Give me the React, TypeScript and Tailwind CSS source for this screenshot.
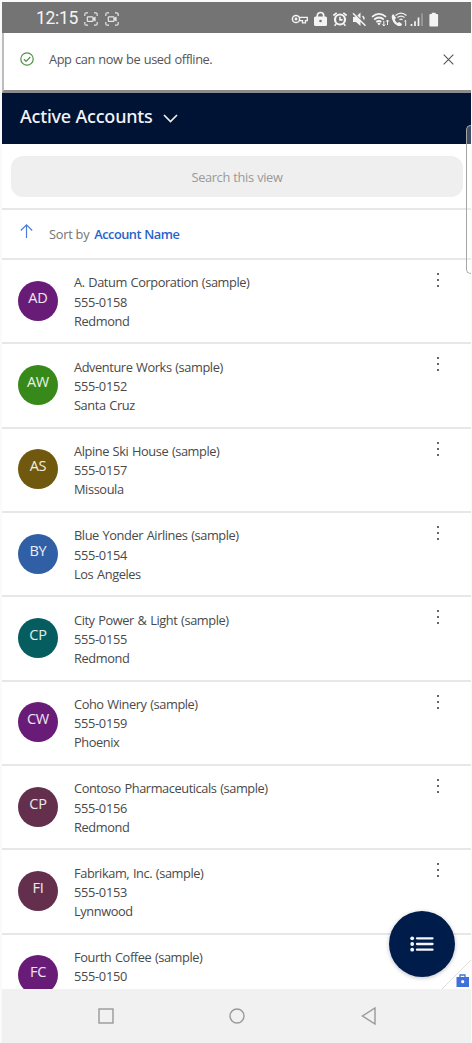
import React from 'react';

type Account = { initials: string; name: string; phone: string; city?: string; color: string };

const accounts: Account[] = [
  { initials: 'AD', name: 'A. Datum Corporation (sample)', phone: '555-0158', city: 'Redmond', color: 'bg-[#681c78]' },
  { initials: 'AW', name: 'Adventure Works (sample)', phone: '555-0152', city: 'Santa Cruz', color: 'bg-[#37891a]' },
  { initials: 'AS', name: 'Alpine Ski House (sample)', phone: '555-0157', city: 'Missoula', color: 'bg-[#70590e]' },
  { initials: 'BY', name: 'Blue Yonder Airlines (sample)', phone: '555-0154', city: 'Los Angeles', color: 'bg-[#305fa6]' },
  { initials: 'CP', name: 'City Power & Light (sample)', phone: '555-0155', city: 'Redmond', color: 'bg-[#065d60]' },
  { initials: 'CW', name: 'Coho Winery (sample)', phone: '555-0159', city: 'Phoenix', color: 'bg-[#681c78]' },
  { initials: 'CP', name: 'Contoso Pharmaceuticals (sample)', phone: '555-0156', city: 'Redmond', color: 'bg-[#632f4d]' },
  { initials: 'FI', name: 'Fabrikam, Inc. (sample)', phone: '555-0153', city: 'Lynnwood', color: 'bg-[#632f4d]' },
  { initials: 'FC', name: 'Fourth Coffee (sample)', phone: '555-0150', color: 'bg-[#681c78]' },
];

function CaptureIcon() {
  return (
    <svg className="h-[14px] w-[14px]" viewBox="0 0 14 14" fill="none" stroke="#e6e6e6" strokeWidth="1.2">
      <path d="M.8 4V2.3Q.8.8 2.3.8H4M10 .8h1.700Q13.200.8 13.200 2.300V4M13.200 10v1.700q0 1.500-1.500 1.500H10M4 13.200H2.300Q.8 13.200.8 11.700V10" />
      <rect x="3.300" y="4.800" width="5.700" height="4.600" rx=".7" />
      <path d="m9 6.800 2-1.200v3L9 7.500" />
    </svg>
  );
}

function StatusIcons() {
  return (
    <svg className="h-[18px] w-[152px]" viewBox="0 0 152 18" fill="none" stroke="#f4f4f4" strokeWidth="1.300">
      <circle cx="5" cy="9" r="3.600" strokeWidth="1.500" />
      <circle cx="5" cy="9" r=".8" />
      <path d="M8 7.400h8.300v3.200h-1.800v2.200h-3v-2.200H8" />
      <path d="M26.300 7V5.700a3.200 3.200 0 0 1 6.400 0V7" strokeWidth="1.700" />
      <rect x="23" y="6.500" width="13" height="9.500" rx="1.500" fill="#f4f4f4" stroke="none" />
      <circle cx="29.500" cy="11" r="1.300" fill="#747474" stroke="none" />
      <circle cx="49" cy="9.500" r="5" strokeWidth="2.200" />
      <path d="M42.300 5.500 45.700 2.800M55.700 5.500 52.300 2.800M45.200 14 43.500 15.700M52.800 14l1.700 1.700M49 6.700v3.200h2.600" strokeWidth="1.600" />
      <path d="M62 7v5h3l4.500 4V10L65 6.500ZM66.300 5.500l3.200-3v6Z" fill="#f4f4f4" stroke="none" />
      <path d="m62 3.200 12.500 12.600M71.500 6.200q1.800 1.400 1.500 3.300" strokeWidth="1.500" />
      <path d="M81 6.800q7-6 14 0M83.200 9.500q4.800-4 9.600 0M85.300 12q2.700-2 5 0" strokeWidth="1.700" />
      <path d="m86.300 13.400 1.700-.8 1.700.8L88 15.600Z" fill="#f4f4f4" stroke="none" />
      <path d="M92.800 11v5m-1.400-1.600 1.400 1.600 1.400-1.600M96.500 15v-5m-1.400 1.600 1.400-1.600 1.400 1.600" strokeWidth="1" />
      <path d="M102.500 4.200c-1.800.3-2.100 2.400-1.500 4.500.9 3.500 3.600 6.600 6.800 7.300 1.700.4 3-.4 3.200-2l-2.800-2.100-1.700 1.100c-1.300-.8-2.300-2-2.700-3.400l1.300-1.700Z" fill="#f4f4f4" stroke="none" />
      <path d="M104.500 5.500q5.500-4.800 11 0M106.500 7.600q3.500-2.800 7 0M108.500 9.700q1.500-1.200 3 0" />
      <path d="m113.300 11.300 1.400-.9v5.600" strokeWidth="1" />
      <path d="M120.500 14v2M124 11.300V16M127.500 7.500V16" strokeWidth="1.700" />
      <path d="M131 3.500V16" stroke="#a6a6a6" strokeWidth="1.400" />
      <path d="M140.800 2.700h3.900v1.400h1.500q.9 0 .9.900v10.600q0 .9-.9.900h-6.900q-.9 0-.9-.9V5q0-.9.900-.9h1.500Z" fill="#f4f4f4" stroke="none" />
    </svg>
  );
}

function AccountRow({ account }: { account: Account }) {
  return (
    <li className="flex h-[84.350px] shrink-0 border-b-2 border-[#e7e7e7] pl-4">
      <div className={`mt-[20.500px] flex h-10 w-10 shrink-0 justify-center rounded-full pt-[7px] text-[14.500px] leading-5 tracking-[-0.2px] text-white/90 ${account.color}`}>
        {account.initials}
      </div>
      <div className="ml-4 flex-1 whitespace-nowrap pt-[13.300px] text-[12.800px] leading-[19.200px] text-[#494949]">
        <div className="tracking-[-0.420px] [word-spacing:0.8px]">{account.name}</div>
        <div className="tracking-[-0.3px]">{account.phone}</div>
        {account.city && <div className="tracking-[-0.4px] [word-spacing:0.8px]">{account.city}</div>}
      </div>
      <button className="mr-[31px] mt-[13px] flex h-[14px] w-[4px] flex-col items-center justify-between" aria-label="More options">
        <span className="h-[2px] w-[2px] bg-[#666]" />
        <span className="h-[2px] w-[2px] bg-[#666]" />
        <span className="h-[2px] w-[2px] bg-[#666]" />
      </button>
    </li>
  );
}

export default function App() {
  return (
    <div className="h-[1043px] w-[472px] overflow-hidden bg-[#fafafa] pl-[2px] pr-[1px] pt-[2px] font-['Open_Sans','Noto_Sans',sans-serif]">
      <div className="relative flex h-full flex-col overflow-hidden bg-white">
        <div className="flex h-[31px] shrink-0 items-center bg-[#747474] pl-[34px] pr-[28px] pt-[2px]">
          <span className="w-[48px] whitespace-nowrap font-['Roboto',sans-serif] text-[17.500px] leading-[29px] tracking-[-0.3px] text-[#f4f4f4]">12:15</span>
          <div className="flex gap-[7px]"><CaptureIcon /><CaptureIcon /></div>
          <div className="ml-auto"><StatusIcons /></div>
        </div>

        <div className="flex h-[60px] shrink-0 items-center border-b-[3px] border-l-2 border-b-[#8c8c8c] border-l-[#bdbdbd] bg-white pl-[16px] pr-[17px]">
          <svg className="-mt-[6px] h-[14px] w-[14px]" viewBox="0 0 14 14" fill="none" stroke="#529247" strokeWidth="1.200">
            <circle cx="7" cy="7" r="6.200" />
            <path d="m3.900 7.300 2.200 2 4.200-4.300" />
          </svg>
          <span className="-mt-[4px] ml-[15px] text-[12.800px] tracking-[-0.420px] text-[#555] [word-spacing:0.6px]">App can now be used offline.</span>
          <svg className="-mt-[5px] ml-auto h-[11px] w-[11px]" viewBox="0 0 11 11" fill="none" stroke="#555" strokeWidth="1.100">
            <path d="m.7.7 9.600 9.600m0-9.600L.7 10.300" />
          </svg>
        </div>

        <header className="flex h-[51px] shrink-0 items-center bg-[#001334] pl-[18px]">
          <h1 className="-mt-[4px] font-['Noto_Sans',sans-serif] text-[18px] font-medium tracking-[-0.2px] text-[#f3f4f6]">Active Accounts</h1>
          <svg className="ml-[10px] h-[9px] w-[15px]" viewBox="0 0 15 9" fill="none" stroke="#eee" strokeWidth="1.700">
            <path d="m1 1 6.500 6.500L14 1" />
          </svg>
        </header>

        <div className="flex h-[65.500px] shrink-0 items-start border-b-2 border-[#e7e7e7] pl-[9px] pr-[8px] pt-[12px]">
          <div className="flex h-[41px] w-full items-center justify-center rounded-[12px] bg-[#efefef] pt-[2px] text-[12.800px] tracking-[-0.350px] text-[#999] [word-spacing:0.5px]">
            Search this view
          </div>
        </div>

        <div className="flex h-[50.500px] shrink-0 items-center border-b-2 border-[#e7e7e7] pl-[18px] text-[12.800px]">
          <svg className="-mt-[5px] h-[14px] w-[13px]" viewBox="0 0 13 14" fill="none" stroke="#4b7dd6" strokeWidth="1.200">
            <path d="M6.500 14V1M.8 6.500 6.500.9l5.700 5.600" />
          </svg>
          <span className="ml-[16px] mt-[2px] tracking-[-0.250px] text-[#747474]">Sort by</span>
          <span className="ml-[5px] mt-[2px] font-semibold tracking-[-0.520px] text-[#2862c9] [word-spacing:0.5px]">Account Name</span>
        </div>

        <ul className="flex min-h-0 flex-1 flex-col overflow-hidden">
          {accounts.map((account) => <AccountRow key={account.name} account={account} />)}
        </ul>

        <nav className="flex h-[54px] shrink-0 items-center bg-[#f1f1f1] pl-[96px]">
          <svg className="h-4 w-4" viewBox="0 0 16 16" fill="none" stroke="#999" strokeWidth="1.400"><rect x="1" y="1" width="14" height="14" /></svg>
          <svg className="ml-[115px] h-4 w-4" viewBox="0 0 16 16" fill="none" stroke="#999" strokeWidth="1.400"><circle cx="8" cy="8" r="7" /></svg>
          <svg className="ml-[116px] h-[18px] w-[15px]" viewBox="0 0 15 18" fill="none" stroke="#999" strokeWidth="1.400"><path d="M14 1v16L1.500 9Z" /></svg>
        </nav>

        <svg className="absolute bottom-[54px] right-0 h-[29px] w-[29px]" viewBox="0 0 29 29">
          <path d="M29 0v29H0Z" fill="white" />
          <path d="M0 29 29 0" stroke="#ddd" />
          <path d="M14.500 17h12.500v10H14.500Z" fill="#4071db" />
          <path d="M18 17v-2h5v2" fill="none" stroke="#4071db" strokeWidth="1.300" />
          <circle cx="20.700" cy="21.700" r="1.600" fill="white" />
        </svg>

        <button className="absolute bottom-[66px] right-[16px] flex h-[66px] w-[66px] items-center justify-center rounded-full bg-[#001c4b] shadow-[0_1px_4px_rgba(0,0,0,0.25)]" aria-label="Open list">
          <svg className="h-[16px] w-[24px]" viewBox="0 0 24 16" stroke="#f5f6fa" fill="#f5f6fa">
            <path d="M7 2.300h15.500M7 8h15.500M7 13.700h15.500" strokeWidth="2.300" strokeLinecap="round" />
            <g stroke="none"><circle cx="2.200" cy="2.300" r="1.900" /><circle cx="2.200" cy="8" r="1.900" /><circle cx="2.200" cy="13.700" r="1.900" /></g>
          </svg>
        </button>

        <div className="absolute right-0 top-[123px] h-[149px] w-[5px] rounded-l-[6px] border-y border-l border-[#a6a6a6] bg-white/25" />
      </div>
    </div>
  );
}
